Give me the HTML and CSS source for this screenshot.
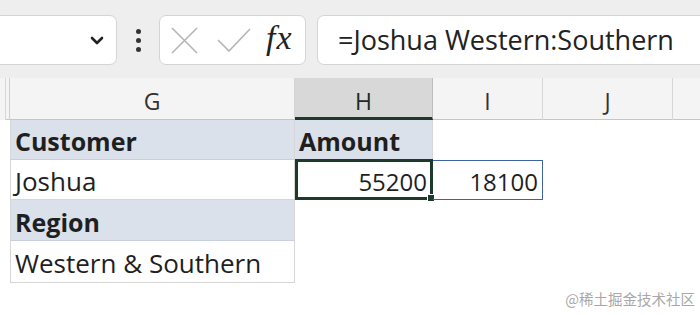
FILE: index.html
```html
<!DOCTYPE html>
<html lang="en">
<head>
  <meta charset="UTF-8">
  <title>Formula bar</title>
  <link rel="stylesheet" href="styles.css">
</head>
<body>
  <div class="toolbar">
    <div class="namebox">
      <svg class="chevron" width="14" height="10" viewBox="0 0 14 10"><path d="M2 2 L7 7 L12 2" fill="none" stroke="#222" stroke-width="2.6" stroke-linecap="round" stroke-linejoin="round"/></svg>
    </div>
    <div class="dots"><span></span><span></span><span></span></div>
    <div class="fxbox">
      <svg width="27" height="27" viewBox="0 0 27 27"><path d="M1 1 L26 26 M26 1 L1 26" stroke="#b4b4b4" stroke-width="1.6"/></svg>
      <svg width="34" height="24" viewBox="0 0 34 24"><path d="M1 12 L12 23 L33 1" fill="none" stroke="#b4b4b4" stroke-width="1.6"/></svg>
      <span class="fx">fx</span>
    </div>
    <div class="formula">=Joshua Western:Southern</div>
  </div>

  <div class="headers">
    <div class="corner"></div>
    <div class="colhead">G</div>
    <div class="colhead selected">H</div>
    <div class="colhead">I</div>
    <div class="colhead">J</div>
    <div class="colhead last"></div>
  </div>

  <div class="sheet">
    <div class="gap"></div>
    <div class="cell band bold">Customer</div>
    <div class="cell band bold">Amount</div>
    <div class="cell empty"></div>
    <div class="cell empty"></div>
    <div class="cell empty"></div>

    <div class="gap"></div>
    <div class="cell">Joshua</div>
    <div class="cell num active">55200<span class="handle"></span></div>
    <div class="cell num spill">18100</div>
    <div class="cell empty"></div>
    <div class="cell empty"></div>

    <div class="gap"></div>
    <div class="cell band bold">Region</div>
    <div class="cell empty"></div>
    <div class="cell empty"></div>
    <div class="cell empty"></div>
    <div class="cell empty"></div>

    <div class="gap"></div>
    <div class="cell last-row">Western &amp; Southern</div>
    <div class="cell empty"></div>
    <div class="cell empty"></div>
    <div class="cell empty"></div>
    <div class="cell empty"></div>
  </div>

  <div class="watermark">@稀土掘金技术社区</div>
</body>
</html>
```

FILE: styles.css
```css
body {
  margin: 0;
  width: 700px;
  height: 315px;
  overflow: hidden;
  background: white;
  font-family: "Open Sans", sans-serif;
  position: relative;
}
.toolbar {
  height: 78px;
  background-color: #eeeeee;
  display: flex;
  align-items: flex-start;
  padding-top: 15px;
  box-sizing: border-box;
}
.namebox, .fxbox, .formula {
  height: 50px;
  background: white;
  border: 1px solid #d4d4d4;
  border-radius: 7px;
  box-sizing: border-box;
}
.namebox {
  width: 123px;
  margin-left: -6px;
  display: flex;
  align-items: center;
  justify-content: flex-end;
  padding-right: 12px;
}
.chevron {
  margin-top: 2px;
}
.dots {
  width: 42px;
  display: flex;
  flex-direction: column;
  align-items: center;
  justify-content: center;
  gap: 4px;
  height: 50px;
}
.dots span {
  width: 5px;
  height: 5px;
  border-radius: 50%;
  background: #333;
}
.fxbox {
  width: 147px;
  display: flex;
  align-items: center;
  padding-left: 11px;
  gap: 19px;
}
.fx {
  font-family: "Liberation Serif", serif;
  font-style: italic;
  font-size: 34px;
  color: #222;
  margin-left: -4px;
  margin-top: -5px;
  letter-spacing: 1px;
}
.formula {
  flex: 1;
  margin-left: 11px;
  margin-right: -10px;
  display: flex;
  align-items: center;
  padding-left: 20px;
  padding-bottom: 2px;
  font-size: 27px;
  color: #222;
}
.headers, .sheet {
  display: grid;
  grid-template-columns: 10px 285px 138px 110px 130px 1fr;
}
.headers {
  height: 42px;
  background: #f4f4f4;
  border-bottom: 1px solid #c6c6c6;
  box-sizing: border-box;
}
.corner {
  border-right: 1px solid #d0d0d0;
  box-shadow: inset 5px 0 0 #f4f4f4, inset 6px 0 0 #d8d8d8;
}
.colhead {
  display: flex;
  align-items: center;
  justify-content: center;
  border-right: 1px solid #d6d6d6;
  font-size: 23px;
  color: #333;
  padding-top: 4px;
}
.colhead.selected {
  background: #d8d8d8;
  border-bottom: 3px solid #1d3a2b;
  border-right-color: #bdbdbd;
  color: #1d2b24;
  padding-top: 7px;
}
.colhead.last {
  border-right: none;
}
.sheet {
  grid-template-rows: 40px 40px 41px 42px;
}
.cell {
  display: flex;
  align-items: center;
  padding: 3px 4px 0;
  font-size: 26px;
  color: #1f1f1f;
  border-bottom: 1px solid #d6d6d6;
  border-right: 1px solid #d6d6d6;
  box-sizing: border-box;
  position: relative;
}
.gap + .cell {
  border-left: 1px solid #d6d6d6;
}
.cell.empty {
  border: none;
}
.band {
  background: #dbe1eb;
  border-bottom-color: #c9d0db;
}
.bold {
  font-weight: bold;
  font-size: 25px;
}
.num {
  justify-content: flex-end;
  font-size: 24px;
}
.active {
  border: 3px solid #1d3a2b;
  margin-top: -1px;
  padding-right: 3px;
}
.spill {
  border: 1px solid #3f62a3;
  border-left: none;
  padding-right: 4px;
}
.handle {
  position: absolute;
  right: -5px;
  bottom: -5px;
  width: 6px;
  height: 6px;
  background: #1d3a2b;
  border: 1px solid white;
}
.watermark {
  position: absolute;
  right: 5px;
  bottom: 6px;
  font-family: "Noto Sans CJK SC", sans-serif;
  font-size: 14.5px;
  color: #a8a8a8;
}
```
